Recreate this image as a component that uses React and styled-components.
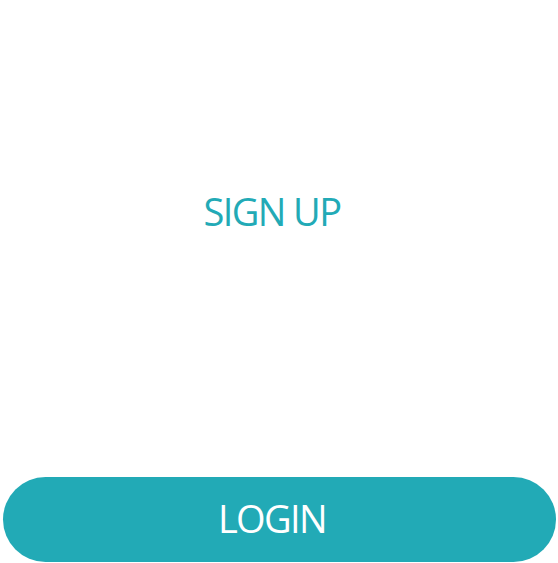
import React from 'react'
import styled, { createGlobalStyle } from 'styled-components';

const GlobalStyle = createGlobalStyle`
    html, body {
        margin: 0;
        padding: 0;
        background-color: #ffffff;
    }

    body {
        font-family: "Open Sans", "Liberation Sans", sans-serif;
    }
`;

const App = () => {
    return (
        <>
            <GlobalStyle />
            <PageContainer>
                <Hero>
                    <SignUpLink href='#signup'>SIGN UP</SignUpLink>
                </Hero>
                <LoginBtn type='button'>LOGIN</LoginBtn>
            </PageContainer>
        </>
    )
}

const PageContainer = styled.div`
    height: 100vh;
    display: flex;
    flex-direction: column;
    box-sizing: border-box;
    padding: 0 2px 1px 3px;
`;

const Hero = styled.div`
    flex: 1;
    display: flex;
    justify-content: center;
    align-items: flex-start;
    padding: 183px 15px 0 0;
`;

const SignUpLink = styled.a`
    color: #22aab6;
    text-decoration: none;
    font-size: 38px;
    line-height: 56px;
    letter-spacing: -1.6px;
`;

const LoginBtn = styled.button`
    height: 85px;
    width: 100%;
    border: none;
    border-radius: 43px;
    padding: 0 15px 4px 0;
    background-color: #22aab6;
    color: #ffffff;
    font-family: "Open Sans", "Liberation Sans", sans-serif;
    font-size: 38px;
    letter-spacing: -1.6px;
    cursor: pointer;
`;

export default App
